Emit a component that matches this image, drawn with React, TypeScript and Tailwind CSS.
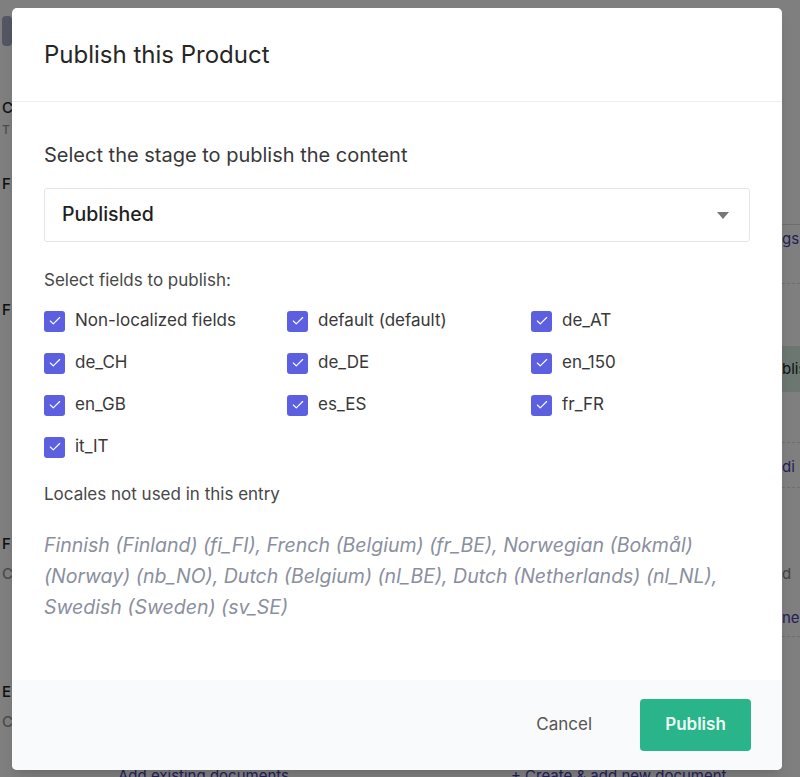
import { Check } from "lucide-react";

const FIELDS = [
  "Non-localized fields",
  "default (default)",
  "de_AT",
  "de_CH",
  "de_DE",
  "en_150",
  "en_GB",
  "es_ES",
  "fr_FR",
  "it_IT",
];

const UNUSED =
  "Finnish (Finland) (fi_FI), French (Belgium) (fr_BE), Norwegian (Bokmål) (Norway) (nb_NO), Dutch (Belgium) (nl_BE), Dutch (Netherlands) (nl_NL), Swedish (Sweden) (sv_SE)";

function Backdrop() {
  // the page behind the dialog, only its edges peek out
  return (
    <div className="flex h-[777px] w-[800px] flex-col overflow-hidden bg-white text-[#222] [font-family:Inter,sans-serif]">
      <div className="flex flex-1">
        <div className="flex w-[12px] flex-col pl-[2px] text-[15px] font-medium leading-[20px]">
          <div className="mt-[16px] h-[30px] w-[10px] rounded-[4px] bg-[#a9acc8]" />
          <span className="mt-[52px]">C</span>
          <span className="mt-[2px] text-[12px] text-[#999]">T</span>
          <span className="mt-[34px]">F</span>
          <span className="mt-[106px]">F</span>
          <span className="mt-[214px]">F</span>
          <span className="mt-[10px] text-[#999]">C</span>
          <span className="mt-[98px]">E</span>
          <span className="mt-[10px] text-[#999]">C</span>
        </div>
        <div className="flex-1" />
        <div className="flex w-[18px] flex-col overflow-hidden text-[15px] leading-[20px]">
          <div className="mt-[224px] border-t border-[#ddd]" />
          <span className="mt-[4px] text-[#4a3fb0]">gs</span>
          <div className="mt-[34px] border-t border-dashed border-[#ddd]" />
          <div className="mt-[62px] flex h-[46px] items-center bg-[#d8efe4] text-[#222]">blis</div>
          <div className="mt-[50px] border-t border-dashed border-[#ddd]" />
          <span className="mt-[14px] text-[#4a3fb0]">di</span>
          <div className="mt-[10px] border-t border-dashed border-[#ddd]" />
          <span className="mt-[76px] text-[#888]">d</span>
          <span className="mt-[24px] text-[#4a3fb0]">ne</span>
          <div className="mt-[8px] border-t border-dashed border-[#ddd]" />
        </div>
      </div>
      <div className="flex h-[7px] items-start overflow-visible text-[15px] leading-[14px] text-[#4a3fb0]">
        <span className="ml-[118px] -mt-[1px]">Add existing documents</span>
        <span className="ml-[222px] -mt-[1px]">+ Create &amp; add new document</span>
      </div>
    </div>
  );
}

function Box() {
  return (
    <span className="flex h-[21px] w-[21px] shrink-0 items-center justify-center rounded-[3px] bg-[#5b5fe0]">
      <Check className="h-[14px] w-[14px] text-white" strokeWidth={2} />
    </span>
  );
}

export default function App() {
  return (
    <div className="relative h-[777px] w-[800px] overflow-hidden [font-family:Inter,'Noto_Sans',sans-serif]">
      <Backdrop />
      <div className="absolute inset-0 bg-black/50 pl-[12px] pt-[8px]">
        <div className="flex h-[762px] w-[770px] flex-col overflow-hidden rounded-[5px] bg-white shadow-lg">
          <div className="flex h-[94px] shrink-0 items-center border-b border-[#eceef1] px-[32px]">
            <h2 className="text-[24px] font-normal leading-[30px] text-[#262626]">Publish this Product</h2>
          </div>

          <div className="flex flex-1 flex-col px-[32px]">
            <p className="mt-[40px] text-[20px] leading-[26px] text-[#383838]">Select the stage to publish the content</p>

            <div className="mt-[20px] flex h-[54px] items-center justify-between rounded-[3px] border border-[#e3e5e9] pl-[17px] pr-[20px]">
              <span className="text-[19.5px] font-medium text-[#1f1f1f]">Published</span>
              <svg width="12" height="7" viewBox="0 0 12 7" className="text-[#777]">
                <path d="M0 0h12L6 7z" fill="currentColor" />
              </svg>
            </div>

            <p className="mt-[27px] text-[17px] leading-[22px] text-[#474747]">Select fields to publish:</p>

            <div className="mt-[9px] grid grid-cols-[243px_244px_1fr]">
              {FIELDS.map(f => (
                <label key={f} className="flex h-[42px] items-center gap-[10px] text-[17px] text-[#383838]">
                  <Box />
                  <span>{f}</span>
                </label>
              ))}
            </div>

            <p className="mt-[15px] text-[17px] leading-[22px] text-[#474747]">Locales not used in this entry</p>

            <p className="mt-[25px] text-[19.5px] italic leading-[31px] text-[#8a8f9e]">{UNUSED}</p>
          </div>

          <div className="flex h-[90px] shrink-0 items-center justify-end bg-[#f9fafb] pr-[31px]">
            <button className="mr-[48px] text-[17px] text-[#555]">Cancel</button>
            <button className="h-[52px] w-[111px] rounded-[4px] bg-[#29b48a] text-[17px] font-semibold text-[#eefcf6]">
              Publish
            </button>
          </div>
        </div>
      </div>
    </div>
  );
}
